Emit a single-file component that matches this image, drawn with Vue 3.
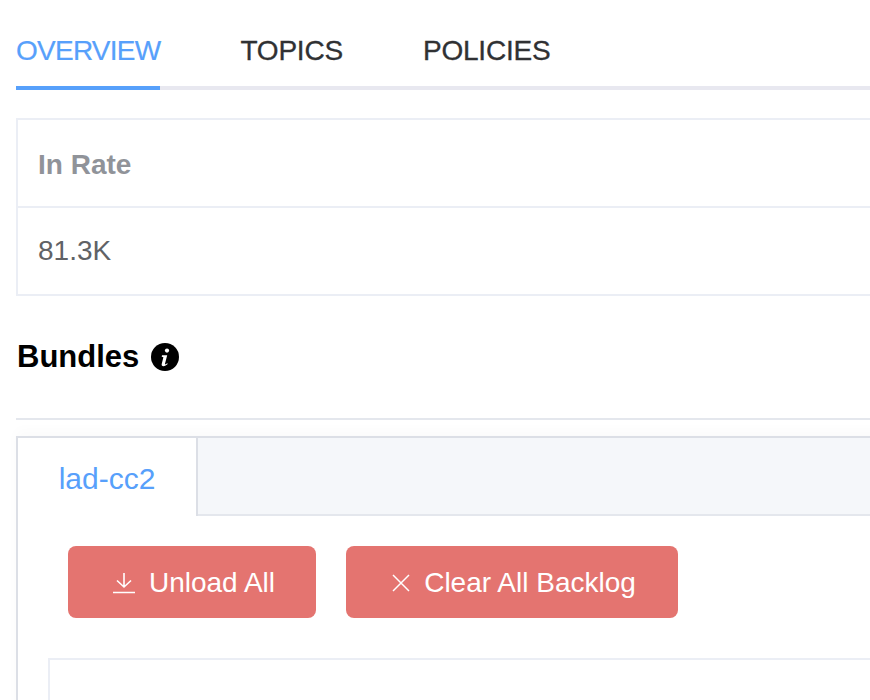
<template>
  <div class="page">
    <div class="tabs">
      <div
        v-for="(tab, i) in tabs"
        :key="tab"
        class="tab"
        :class="{ active: i === 0 }"
      >
        {{ tab }}
      </div>
    </div>

    <div class="stats">
      <div class="statsHead">In Rate</div>
      <div class="statsCell">81.3K</div>
    </div>

    <h2 class="title">
      Bundles
      <svg class="info" viewBox="0 0 28 28" width="28" height="28">
        <circle cx="14" cy="14" r="14" fill="#000" />
        <circle cx="16" cy="7.6" r="2.1" fill="#fff" />
        <path
          d="M11 12.2h5.2l-2.2 8.6c-.1.5.2.7.6.5l1.7-1 .4.8c-1.300 1.200-2.800 2.200-4.300 2.200-1.400 0-2-.9-1.700-2.200l1.700-6.800-1.700-.5z"
          fill="#fff"
        />
      </svg>
    </h2>

    <div class="divider"></div>

    <div class="card">
      <div class="cardTabs">
        <div class="cardTab">lad-cc2</div>
        <div class="cardTabRest"></div>
      </div>
      <div class="actions">
        <button class="btn">
          <svg class="btnIcon" viewBox="0 0 22 22" width="22" height="22">
            <path
              d="M11 1v14M4 8.500l7 6.500 7-6.500M0 20.500h22"
              fill="none"
              stroke="#fff"
              stroke-width="1.600"
            />
          </svg>
          Unload All
        </button>
        <button class="btn btnClear">
          <svg class="btnIcon" viewBox="0 0 18 18" width="18" height="18">
            <path
              d="M1 1l16 16M17 1L1 17"
              fill="none"
              stroke="#fff"
              stroke-width="1.500"
            />
          </svg>
          Clear All Backlog
        </button>
      </div>
      <div class="inner"></div>
    </div>
  </div>
</template>

<script setup>
const tabs = ["OVERVIEW", "TOPICS", "POLICIES"];
</script>

<style>
html,
body {
  overflow: hidden;
}
</style>

<style scoped>
.page {
  width: 870px;
  height: 700px;
  overflow: hidden;
  box-sizing: border-box;
  padding-left: 16px;
  background: #fff;
  font-family: "Liberation Sans", Arial, sans-serif;
}

.tabs {
  display: flex;
  gap: 80px;
  width: 880px;
  height: 90px;
  box-sizing: border-box;
  border-bottom: 4px solid #e8e8f0;
}
.tab {
  height: 90px;
  box-sizing: border-box;
  padding-top: 34px;
  font-size: 28px;
  line-height: 34px;
  letter-spacing: -0.2px;
  color: #303133;
  -webkit-text-stroke: 0.3px #303133;
}
.tab.active {
  color: #57a0fb;
  letter-spacing: -0.75px;
  border-bottom: 4px solid #57a0fb;
  -webkit-text-stroke: 0.2px #57a0fb;
}

.stats {
  width: 900px;
  margin-top: 28px;
  border: 2px solid #ebeef5;
  box-sizing: border-box;
}
.statsHead,
.statsCell {
  height: 86px;
  padding-left: 20px;
  font-size: 28px;
  line-height: 85px;
  box-sizing: border-box;
}
.statsHead {
  font-weight: bold;
  color: #909399;
  height: 88px;
  line-height: 89px;
  border-bottom: 2px solid #ebeef5;
}
.statsCell {
  color: #606266;
}

.title {
  display: flex;
  align-items: center;
  gap: 12px;
  margin: 45px 0 0;
  height: 32px;
  padding-left: 1px;
  font-size: 31px;
  font-weight: bold;
  color: #000;
}

.divider {
  width: 880px;
  height: 2px;
  margin-top: 45px;
  background: #e4e7ed;
}

.card {
  width: 900px;
  height: 400px;
  margin-top: 16px;
  box-sizing: border-box;
  border: 2px solid #dcdfe6;
  border-bottom: 0;
  box-shadow: 0 -6px 12px rgba(0, 0, 0, 0.02);
}
.cardTabs {
  display: flex;
  height: 78px;
}
.cardTab {
  width: 180px;
  box-sizing: border-box;
  border-right: 2px solid #dcdfe6;
  text-align: center;
  font-size: 30px;
  line-height: 82px;
  color: #57a0fb;
}
.cardTabRest {
  flex: 1;
  background: #f5f7fa;
  border-bottom: 2px solid #e4e7ed;
}

.actions {
  display: flex;
  gap: 30px;
  padding: 30px 0 0 50px;
}
.btn {
  display: flex;
  align-items: center;
  justify-content: center;
  gap: 14px;
  width: 248px;
  height: 72px;
  padding: 2px 0 0 4px;
  border: 0;
  border-radius: 8px;
  background: #e47470;
  color: #fff;
  font-family: inherit;
  font-size: 28px;
}
.btnClear {
  width: 332px;
}

.inner {
  margin: 40px 0 0 30px;
  height: 200px;
  border: 2px solid #ebeef5;
}
</style>
